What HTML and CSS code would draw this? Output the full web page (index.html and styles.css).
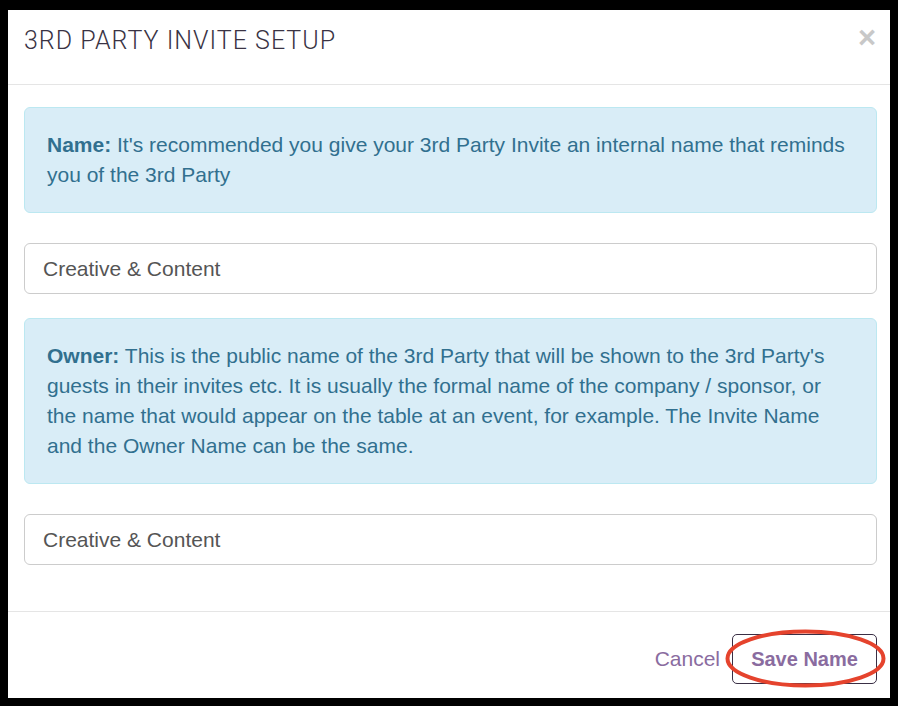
FILE: index.html
```html
<!doctype html>
<html lang="en">
  <head>
    <meta charset="UTF-8" />
    <title>3rd Party Invite Setup</title>
    <link rel="stylesheet" href="styles.css">
  </head>
  <body>
    <div class="modal">
      <div class="modal-header">
        <h4 class="modal-title">3RD PARTY INVITE SETUP</h4>
        <button class="close" type="button">&times;</button>
      </div>
      <div class="modal-body">
        <p class="alert">
          <strong>Name:</strong> It's recommended you give your 3rd Party Invite an internal name that reminds you of the 3rd Party
        </p>
        <div class="form-group">
          <input class="form-control" type="text" value="Creative &amp; Content" />
        </div>
        <p class="alert">
          <strong>Owner:</strong> This is the public name of the 3rd Party that will be shown to the 3rd Party's guests in their invites etc. It is usually the formal name of the company / sponsor, or the name that would appear on the table at an event, for example. The Invite Name and the Owner Name can be the same.
        </p>
        <div class="form-group">
          <input class="form-control" type="text" value="Creative &amp; Content" />
        </div>
      </div>
      <div class="modal-footer">
        <button class="btn-link" type="button">Cancel</button>
        <div class="save-wrap">
          <button class="btn-save" type="button">Save Name</button>
          <!-- annotation drawn over the save button -->
          <svg class="highlight" width="161" height="59" viewBox="0 0 161 59">
            <ellipse cx="80.5" cy="29.5" rx="78" ry="27" fill="none" stroke="#e5432d" stroke-width="4"></ellipse>
          </svg>
        </div>
      </div>
    </div>
  </body>
</html>
```

FILE: styles.css
```css
* {
  box-sizing: border-box;
  margin: 0;
  padding: 0;
}

html,
body {
  background: #000;
}

body {
  padding: 10px 8px 8px 8px;
  font-family: 'Liberation Sans', Arial, sans-serif;
}

.modal {
  width: 882px;
  height: 688px;
  background: #fff;
  display: flex;
  flex-direction: column;
}

.modal-header {
  display: flex;
  justify-content: space-between;
  align-items: flex-start;
  height: 75px;
  padding: 16px 14px 0 16px;
  border-bottom: 1px solid #e5e5e5;
}

.modal-title {
  font-family: Roboto, sans-serif;
  font-weight: 300;
  font-size: 25px;
  letter-spacing: 1px;
  line-height: 30px;
  color: #3a3344;
}

.close {
  margin-top: -3px;
  border: none;
  background: none;
  font-family: 'Liberation Sans', Arial, sans-serif;
  font-weight: bold;
  font-size: 31px;
  line-height: 30px;
  color: #c8c8c8;
  cursor: pointer;
}

.modal-body {
  padding: 22px 13px 22px 16px;
  flex: 1;
}

.alert {
  padding: 22px 22px;
  margin-bottom: 30px;
  background: #d9edf7;
  border: 1px solid #bce8f1;
  border-radius: 6px;
  color: #31708f;
  font-size: 21px;
  line-height: 30px;
}

.form-group {
  margin-bottom: 24px;
}

.form-control {
  display: block;
  width: 100%;
  height: 51px;
  margin-top: 1px;
  padding: 0 18px;
  border: 1px solid #ccc;
  border-radius: 6px;
  font-family: 'Liberation Sans', Arial, sans-serif;
  font-size: 21px;
  color: #555;
  background: #fff;
}

.modal-footer {
  display: flex;
  justify-content: flex-end;
  align-items: flex-start;
  gap: 12px;
  height: 87px;
  padding: 22px 13px 0 16px;
  border-top: 1px solid #e5e5e5;
}

.btn-link {
  height: 50px;
  border: none;
  background: none;
  font-family: 'Liberation Sans', Arial, sans-serif;
  font-size: 21px;
  color: #8a6c9f;
  cursor: pointer;
}

.save-wrap {
  position: relative;
}

.btn-save {
  display: block;
  width: 145px;
  height: 50px;
  border: 1px solid #3a2f45;
  border-radius: 5px;
  background: #fff;
  font-family: 'Liberation Sans', Arial, sans-serif;
  font-weight: bold;
  font-size: 20px;
  color: #8a6c9f;
  cursor: pointer;
}

.highlight {
  position: absolute;
  left: -7px;
  top: -5px;
  pointer-events: none;
}
```
